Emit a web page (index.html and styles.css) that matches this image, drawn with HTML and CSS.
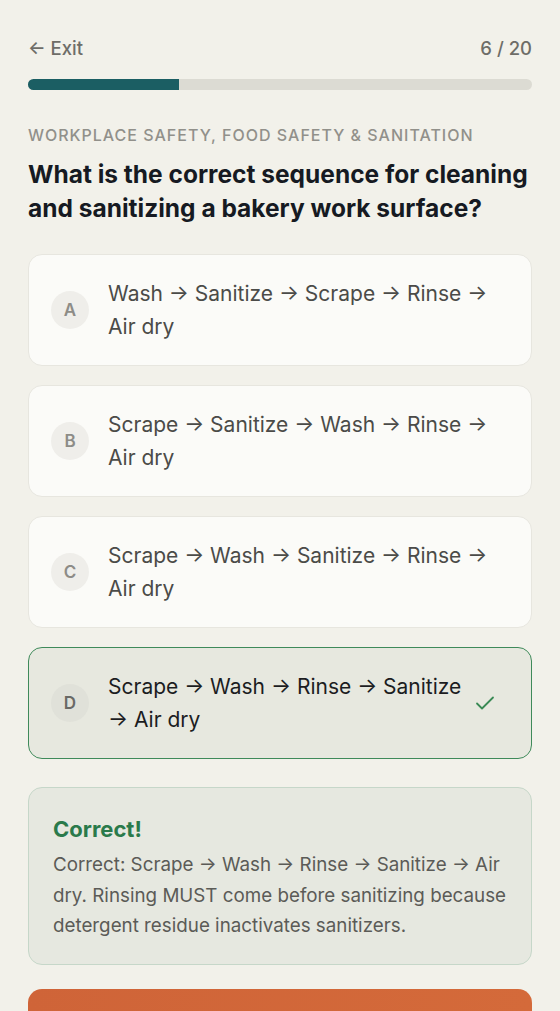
FILE: index.html
```html
<!DOCTYPE html>
<html lang="en">

<head>
    <meta charset="UTF-8" />
    <meta name="viewport" content="width=device-width, initial-scale=1.0" />
    <title>Quiz</title>
    <link rel="stylesheet" href="styles.css">
</head>

<body>
    <div class="pagina">
        <div class="cabecera">
            <span class="salir">&larr; Exit</span>
            <span class="contador">6 / 20</span>
        </div>
        <div class="barra">
            <div class="relleno" style="width: 30%"></div>
        </div>

        <p class="categoria">Workplace Safety, Food Safety &amp; Sanitation</p>
        <h1>What is the correct sequence for cleaning and sanitizing a bakery work surface?</h1>

        <div class="opciones">
            <div class="opcion">
                <span class="letra">A</span>
                <span class="texto">Wash &rarr; Sanitize &rarr; Scrape &rarr; Rinse &rarr; Air dry</span>
            </div>
            <div class="opcion">
                <span class="letra">B</span>
                <span class="texto">Scrape &rarr; Sanitize &rarr; Wash &rarr; Rinse &rarr; Air dry</span>
            </div>
            <div class="opcion">
                <span class="letra">C</span>
                <span class="texto">Scrape &rarr; Wash &rarr; Sanitize &rarr; Rinse &rarr; Air dry</span>
            </div>
            <div class="opcion correcta">
                <span class="letra">D</span>
                <span class="texto">Scrape &rarr; Wash &rarr; Rinse &rarr; Sanitize &rarr; Air dry</span>
                <svg class="check" width="24" height="24" viewBox="0 0 24 24" fill="none" stroke="currentColor" stroke-width="1.8" stroke-linecap="round" stroke-linejoin="round">
                    <path d="M4 12.5l5 5L20 6.5" />
                </svg>
            </div>
        </div>

        <div class="feedback">
            <h2>Correct!</h2>
            <p>Correct: Scrape &rarr; Wash &rarr; Rinse &rarr; Sanitize &rarr; Air dry. Rinsing MUST come before sanitizing because detergent residue inactivates sanitizers.</p>
        </div>

        <button class="siguiente">Next question</button>
    </div>
</body>

</html>
```

FILE: styles.css
```css
* {
    box-sizing: border-box;
    margin: 0;
    padding: 0;
}

body {
    background-color: #f2f1ea;
    font-family: Inter, "Noto Sans", sans-serif;
    color: #1a1d24;
}

.pagina {
    padding: 36px 28px 40px;
}

.cabecera {
    display: flex;
    justify-content: space-between;
    align-items: center;
    font-size: 18.5px;
    font-weight: 500;
    color: #6e6d68;
    height: 24px;
}

.barra {
    margin-top: 19px;
    height: 11px;
    border-radius: 6px;
    background-color: #dcdbd3;
    overflow: hidden;
}

.relleno {
    height: 100%;
    background-color: #1b5e63;
}

.categoria {
    margin-top: 35px;
    font-size: 16px;
    font-weight: 500;
    letter-spacing: 1px;
    text-transform: uppercase;
    color: #91908a;
}

h1 {
    margin-top: 12px;
    font-size: 24.5px;
    line-height: 34px;
    font-weight: 700;
    color: #161a22;
}

.opciones {
    margin-top: 29px;
    display: flex;
    flex-direction: column;
    gap: 19px;
}

.opcion {
    display: flex;
    align-items: center;
    min-height: 112px;
    padding: 22px 22px;
    background-color: #fbfbf8;
    border: 1px solid #e7e6df;
    border-radius: 14px;
}

.letra {
    flex: none;
    width: 38px;
    height: 38px;
    margin-right: 19px;
    border-radius: 50%;
    background-color: #efeeea;
    color: #8d8c87;
    font-size: 17px;
    font-weight: 600;
    display: flex;
    align-items: center;
    justify-content: center;
}

.texto {
    flex: 1;
    font-size: 21px;
    line-height: 33px;
    color: #4b4b48;
    padding-right: 10px;
}

.correcta {
    background-color: #e7e8df;
    border: 1.5px solid #3f8a5a;
}

.correcta .letra {
    background-color: #e0e1d9;
    color: #6a6a66;
}

.correcta .texto {
    color: #1c1d1f;
    padding-right: 0;
}

.check {
    flex: none;
    color: #3a8a55;
    margin-left: 4px;
    margin-right: 12px;
}

.feedback {
    margin-top: 28px;
    padding: 26px 20px 22px 24px;
    background-color: #e6e8e0;
    border: 1px solid #c6d7c9;
    border-radius: 14px;
}

.feedback h2 {
    font-size: 22px;
    font-weight: 700;
    color: #2a7a4b;
    line-height: 30px;
}

.feedback p {
    margin-top: 6px;
    font-size: 18.8px;
    line-height: 30.5px;
    color: #5b5b57;
}

.siguiente {
    display: block;
    width: 100%;
    margin-top: 24px;
    height: 72px;
    padding-top: 12px;
    border: none;
    border-radius: 14px;
    background: linear-gradient(90deg, #cf6438, #d46a3a);
    color: white;
    font-family: Inter, sans-serif;
    font-size: 18px;
    font-weight: 600;
}
```
